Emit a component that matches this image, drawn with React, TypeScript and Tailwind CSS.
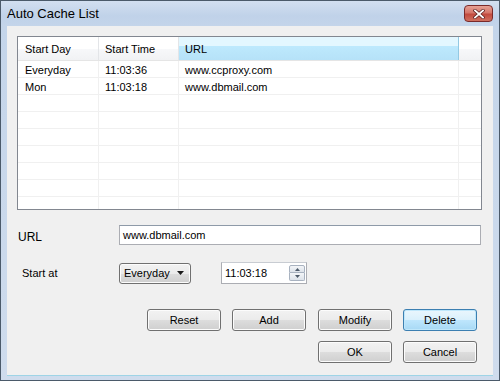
import React from "react";

const F = { fontFamily: '"Liberation Sans", Arial, sans-serif' };

function Btn({ label, focused, className = "" }: { label: string; focused?: boolean; className?: string }) {
  return (
    <div
      className={
        "h-[22px] w-[74px] rounded-[3px] border flex items-center justify-center text-[11px] text-black " +
        (focused
          ? "border-[#3c7fb1] bg-[linear-gradient(to_bottom,#eaf6fd_0%,#d9f0fc_50%,#bee6fd_51%,#a7d9f5_100%)] shadow-[inset_0_0_0_1px_#bfe7fb] "
          : "border-[#707070] bg-[linear-gradient(to_bottom,#f2f2f2_0%,#ebebeb_50%,#dddddd_51%,#cfcfcf_100%)] shadow-[inset_0_0_0_1px_#fcfcfc] ") +
        className
      }
    >
      {label}
    </div>
  );
}

const rows = [
  ["Everyday", "11:03:36", "www.ccproxy.com"],
  ["Mon", "11:03:18", "www.dbmail.com"],
  ["", "", ""],
  ["", "", ""],
  ["", "", ""],
  ["", "", ""],
  ["", "", ""],
  ["", "", ""],
  ["", "", ""],
];

export default function App() {
  return (
    <div style={F} className="w-[500px] h-[381px] bg-[#c4d4e8] border border-[#4b5a6a] flex flex-col text-[11px] text-black overflow-hidden">
      {/* title bar */}
      <div className="h-[25px] flex items-start bg-[linear-gradient(to_bottom,#d2dff0_0%,#c0d2e9_60%,#c4d5ea_100%)]">
        <div className="pl-[6px] pt-[6px] text-[13px] text-black leading-none">Auto Cache List</div>
        <div className="ml-auto mr-[6px] mt-[4px] w-[29px] h-[17px] rounded-[4px] border border-[#7a2a2a] bg-[linear-gradient(to_bottom,#e6a195_0%,#d5766a_45%,#c24a3e_55%,#d0705f_100%)] flex items-center justify-center">
          <svg width="12" height="10" viewBox="0 0 12 10">
            <path d="M2 1.5 L10 8.5 M10 1.5 L2 8.5" stroke="#5a1f1f" strokeWidth="3.2" strokeLinecap="square" />
            <path d="M2 1.5 L10 8.5 M10 1.5 L2 8.5" stroke="#ffffff" strokeWidth="1.8" strokeLinecap="square" />
          </svg>
        </div>
      </div>
      {/* client frame */}
      <div className="flex-1 px-[6px] pb-[4px] bg-[linear-gradient(to_bottom,#c4d5ea,#cfdced)]">
        <div className="h-full bg-[#f0f0f0] border-b border-[#9ed4e6] flex flex-col">
          {/* list view */}
          <div className="ml-[10px] mt-[10px] w-[465px] h-[174px] border border-[#828790] bg-white overflow-hidden flex flex-col">
            <div className="h-[24px] flex shrink-0 border-b border-[#e5e5e5] bg-[linear-gradient(to_bottom,#ffffff_0%,#ffffff_50%,#f7f8fa_51%,#f1f2f4_100%)]">
              <div className="w-[81px] border-r border-[#e3e5e8] flex items-center pl-[7px] pt-[1px]">Start Day</div>
              <div className="w-[80px] border-r border-[#e3e5e8] flex items-center pl-[6px] pt-[1px]">Start Time</div>
              <div className="w-[280px] border-r border-[#93c9e3] flex items-center pl-[6px] pt-[1px] bg-[linear-gradient(to_bottom,#e3f7ff_0%,#e3f7ff_40%,#bde9fd_41%,#b6e2f8_100%)]">URL</div>
              <div className="flex-1" />
            </div>
            {rows.map((r, i) => (
              <div key={i} className="h-[17px] flex shrink-0 border-b border-[#f0f0f0] leading-[13px]">
                <div className="w-[81px] border-r border-[#f0f0f0] pl-[7px] pt-[3px]">{r[0]}</div>
                <div className="w-[80px] border-r border-[#f0f0f0] pl-[6px] pt-[3px]">{r[1]}</div>
                <div className="w-[280px] border-r border-[#f0f0f0] pl-[6px] pt-[3px]">{r[2]}</div>
                <div className="flex-1" />
              </div>
            ))}
          </div>

          {/* URL row */}
          <div className="mt-[15px] flex items-center">
            <div className="w-[112px] pl-[11px] pt-[3px] text-[12px] leading-[14px]">URL</div>
            <div className="w-[362px] h-[20px] border border-[#abadb3] border-t-[#8e9aa8] bg-white flex items-center pl-[3px]">www.dbmail.com</div>
          </div>

          {/* Start at row */}
          <div className="mt-[17px] flex items-center">
            <div className="w-[112px] pl-[15px]">Start at</div>
            <div className="w-[72px] h-[21px] rounded-[3px] border border-[#707070] bg-[linear-gradient(to_bottom,#f2f2f2_0%,#ebebeb_50%,#dddddd_51%,#cfcfcf_100%)] shadow-[inset_0_0_0_1px_#fcfcfc] flex items-center pl-[4px] pr-[6px]">
              <span>Everyday</span>
              <svg className="ml-auto" width="7" height="4" viewBox="0 0 7 4"><path d="M0 0 H7 L3.5 4 Z" fill="#1a1a1a" /></svg>
            </div>
            <div className="ml-[30px] w-[86px] h-[22px] border border-[#abadb3] border-t-[#c8ccd2] bg-white flex items-center pl-[3px]">
              <span>11:03:18</span>
              <div className="ml-auto mr-[1px] flex flex-col">
                <div className="w-[16px] h-[8px] border border-[#a8b2c0] rounded-t-[2px] bg-[linear-gradient(to_bottom,#f3f5f8,#dde3ea)] flex items-center justify-center">
                  <svg width="5" height="3" viewBox="0 0 5 3"><path d="M0 3 L2.5 0 L5 3 Z" fill="#4d5a6a" /></svg>
                </div>
                <div className="w-[16px] h-[8px] border border-t-0 border-[#a8b2c0] rounded-b-[2px] bg-[linear-gradient(to_bottom,#f3f5f8,#dde3ea)] flex items-center justify-center">
                  <svg width="5" height="3" viewBox="0 0 5 3"><path d="M0 0 L5 0 L2.5 3 Z" fill="#4d5a6a" /></svg>
                </div>
              </div>
            </div>
          </div>

          {/* button row 1 */}
          <div className="mt-[25px] flex">
            <Btn label="Reset" className="ml-[140px]" />
            <Btn label="Add" className="ml-[11px]" />
            <Btn label="Modify" className="ml-[12px]" />
            <Btn label="Delete" focused className="ml-[11px]" />
          </div>
          {/* button row 2 */}
          <div className="mt-[10px] flex">
            <Btn label="OK" className="ml-[311px]" />
            <Btn label="Cancel" className="ml-[11px]" />
          </div>
        </div>
      </div>
    </div>
  );
}
